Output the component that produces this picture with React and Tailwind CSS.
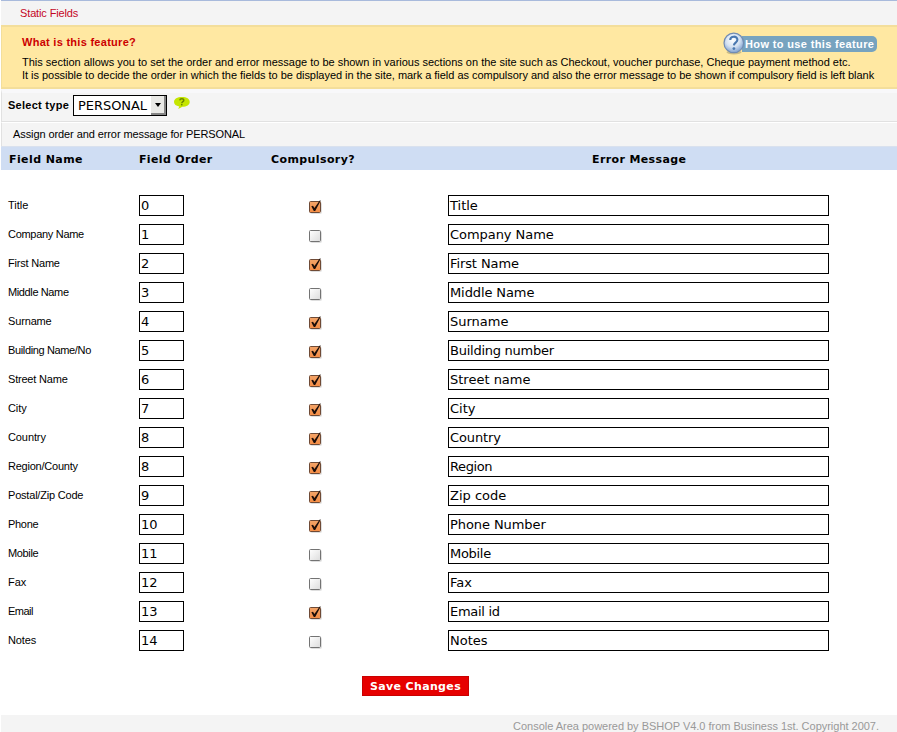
const fields = [
  ["Title", "0", true, "Title", "", ""],
  ["Company Name", "1", false, "Company Name", "tracking-[-0.3px]", "tracking-[-0.05px]"],
  ["First Name", "2", true, "First Name", "tracking-[-0.2px]", "tracking-[-0.1px]"],
  ["Middle Name", "3", false, "Middle Name", "tracking-[-0.38px]", "tracking-[-0.1px]"],
  ["Surname", "4", true, "Surname", "tracking-[-0.15px]", ""],
  ["Building Name/No", "5", true, "Building number", "tracking-[-0.36px]", "tracking-[-0.25px]"],
  ["Street Name", "6", true, "Street name", "tracking-[-0.2px]", ""],
  ["City", "7", true, "City", "tracking-[-0.1px]", ""],
  ["Country", "8", true, "Country", "tracking-[-0.1px]", "tracking-[-0.1px]"],
  ["Region/County", "8", true, "Region", "tracking-[-0.23px]", "tracking-[-0.4px]"],
  ["Postal/Zip Code", "9", true, "Zip code", "tracking-[-0.2px]", ""],
  ["Phone", "10", true, "Phone Number", "tracking-[-0.3px]", "tracking-[-0.08px]"],
  ["Mobile", "11", false, "Mobile", "tracking-[-0.35px]", "tracking-[-0.3px]"],
  ["Fax", "12", false, "Fax", "", ""],
  ["Email", "13", true, "Email id", "tracking-[-0.5px]", "tracking-[-0.3px]"],
  ["Notes", "14", false, "Notes", "tracking-[-0.1px]", ""],
];

function Check({ on }) {
  return (
    <svg width="16" height="16" viewBox="0 0 16 16" className="block">
      <defs>
        <linearGradient id="off" x1="0" y1="0" x2="1" y2="1">
          <stop offset="0" stopColor="#ffffff" />
          <stop offset="1" stopColor="#dcdcdc" />
        </linearGradient>
        <linearGradient id="on" x1="0" y1="0" x2="0" y2="1">
          <stop offset="0" stopColor="#f3a468" />
          <stop offset="1" stopColor="#f58d45" />
        </linearGradient>
      </defs>
      <rect x="2.5" y="3.5" width="11" height="11" rx="1" fill="none" stroke="#dedede" />
      <rect x="1.5" y="2.5" width="11" height="11" rx="1" fill={on ? "url(#on)" : "url(#off)"} stroke={on ? "#6e4a36" : "#737373"} />
      {on && <path d="M3.3 7.2 L5 6.8 L6.4 9 L11.8 1.4 L12.8 1.6 L7.2 12 L5.8 12 Z" fill="#1c0d08" />}
    </svg>
  );
}

function HelpBall() {
  return (
    <svg width="22" height="24" viewBox="0 0 22 24" className="relative z-10 block shrink-0">
      <defs>
        <radialGradient id="ball" cx="0.45" cy="0.35" r="0.65">
          <stop offset="0" stopColor="#ffffff" />
          <stop offset="0.55" stopColor="#d5e2f2" />
          <stop offset="1" stopColor="#7fa0cf" />
        </radialGradient>
      </defs>
      <ellipse cx="11" cy="20.2" rx="7.5" ry="2.2" fill="#a59c76" opacity="0.6" />
      <circle cx="10.8" cy="10.9" r="9.8" fill="url(#ball)" stroke="#718bb2" strokeWidth="1.2" />
      <path d="M7.2 8 C7.2 3.6 14.4 3.6 14.4 7.8 C14.4 10.6 11 10.6 10.9 13.4" fill="none" stroke="#4a78b0" strokeWidth="2.1" />
      <circle cx="10.9" cy="16.6" r="1.4" fill="#4a78b0" />
    </svg>
  );
}

function Bubble() {
  return (
    <svg width="18" height="14" viewBox="0 0 18 14" className="block">
      <path d="M9 1 C13.7 1 16.7 3 16.7 5.9 C16.7 8.8 13.7 10.6 9.4 10.7 L5.2 13 L6.3 10.4 C3 9.8 1 8.2 1 5.9 C1 3 4.3 1 9 1 Z" fill="#c5e600" />
      <path d="M6.8 4.4 C6.9 2.1 11 2.2 10.8 4.4 C10.7 5.7 8.9 5.6 8.8 7.2" fill="none" stroke="#6c8500" strokeWidth="1.4" />
      <rect x="8" y="8" width="1.5" height="1.4" fill="#6c8500" />
    </svg>
  );
}

export default function App() {
  return (
    <div className="flex h-[732px] w-[897px] flex-col overflow-hidden whitespace-nowrap bg-white pl-px font-['Liberation_Sans',Arial,sans-serif] text-[11px] text-black">
      <div className="h-[25px] border-t border-[#a8badc] bg-[#f4f4f4] pl-[19px] leading-[25px] tracking-[-0.13px] text-[#c4061f]">Static Fields</div>

      <div className="h-[64px] border-y-2 border-l border-[#f3de9b] bg-[#ffe8a2]">
        <div className="flex h-[28px] items-start justify-between pl-5 pr-[20px]">
          <h1 className="pt-[8px] font-bold leading-[15px] tracking-[0.28px] text-[#cc0000]">What is this feature?</h1>
          <div className="flex items-start pt-[5px]">
            <HelpBall />
            <div className="-ml-[3px] mt-[4px] h-[16px] w-[135px] rounded-r-[5px] bg-[#77a3bf] pl-[3px] pt-px font-bold leading-[15px] tracking-[0.36px] text-white">
              How to use this feature
            </div>
          </div>
        </div>
        <p className="pl-[20px] pt-px leading-[13px]">
          <span className="tracking-[-0.007px]">This section allows you to set the order and error message to be shown in various sections on the site such as Checkout, voucher purchase, Cheque payment method etc.</span>
          <br />
          <span className="tracking-[-0.031px]">It is possible to decide the order in which the fields to be displayed in the site, mark a field as compulsory and also the error message to be shown if compulsory field is left blank</span>
        </p>
      </div>

      <div className="flex h-[33px] items-start border-b border-l border-[#e1e1e1] border-t-[4px] border-t-[#f8f8fa] bg-[#f4f4f4] pl-[6px]">
        <span className="w-[61px] pt-[5px] font-bold leading-[15px] tracking-[0.27px]">Select type</span>
        <div className="ml-[4px] mt-[2px] flex h-[21px] w-[94px] justify-between border border-black bg-white pl-[4px] font-['DejaVu_Sans',sans-serif] text-[13px] leading-[19px] tracking-[-0.05px]">
          <span>PERSONAL</span>
          <span className="flex w-[15px] items-center justify-center border-b-2 border-r-2 border-[#858585] bg-[#e9e9e6]">
            <svg width="6" height="4" viewBox="0 0 6 4"><path d="M0 0H6L3 4Z" fill="#000" /></svg>
          </span>
        </div>
        <div className="ml-[6px] mt-[3px]"><Bubble /></div>
      </div>

      <div className="h-[24px] border-l border-t border-l-[#e1e1e1] border-t-white bg-[#f4f4f4] pl-[11px] leading-[23px] tracking-[-0.09px]">
        Assign order and error message for PERSONAL
      </div>

      <div className="grid h-[24px] grid-cols-[130px_132px_115px_1fr] border-t border-[#d9e1ee] bg-[#cfddf3] pl-[8px] font-['DejaVu_Sans',sans-serif] text-[11px] font-bold leading-[25px]">
        <span className="tracking-[0.42px]">Field Name</span>
        <span className="tracking-[0.34px]">Field Order</span>
        <span className="tracking-[0.4px]">Compulsory?</span>
        <span className="pl-[206px] tracking-[0.38px]">Error Message</span>
      </div>

      <div className="flex h-[506px] flex-col pt-[25px]">
        {fields.map(([name, order, on, message, nameSpacing, messageSpacing]) => (
          <div key={name} className="grid h-[29px] shrink-0 grid-cols-[131px_169px_140px_381px] items-start pl-[7px]">
            <span className={"pt-[3px] leading-[15px] " + nameSpacing}>{name}</span>
            <span className="h-[21px] w-[45px] border border-black pl-[1px] font-['DejaVu_Sans',sans-serif] text-[13px] leading-[20px]">{order}</span>
            <span className="pt-[4px]"><Check on={on} /></span>
            <span className={"h-[21px] border border-black pl-[1px] font-['DejaVu_Sans',sans-serif] text-[13px] leading-[20px] " + messageSpacing}>{message}</span>
          </div>
        ))}
      </div>

      <div className="h-[39px] shrink-0 pl-[361px]">
        <button className="block h-[20px] w-[107px] border border-[#c90000] bg-[#e60000] text-center font-['DejaVu_Sans',sans-serif] text-[11px] font-bold leading-[19px] tracking-[0.36px] text-white">Save Changes</button>
      </div>

      <div className="h-[17px] shrink-0 bg-[#f4f4f4] pr-[18px] pt-[4px] text-right leading-[15px] tracking-[-0.02px] text-[#999999]">
        Console Area powered by BSHOP V4.0 from Business 1st. Copyright 2007.
      </div>
    </div>
  );
}
